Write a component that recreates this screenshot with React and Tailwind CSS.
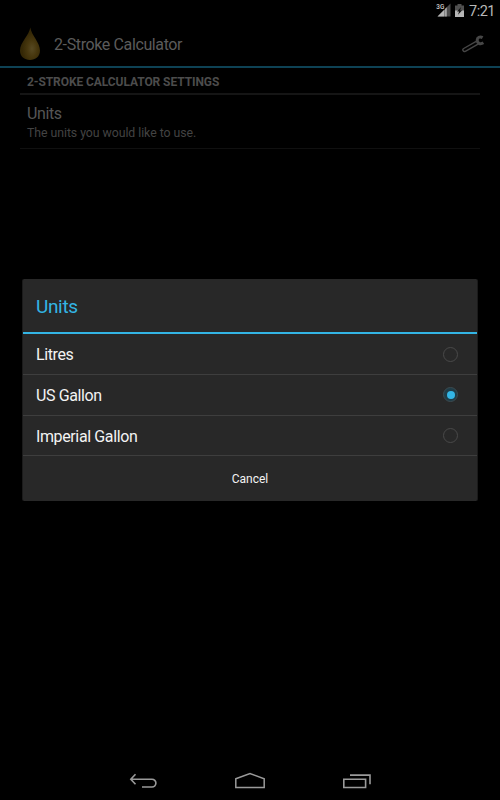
import React, { useState } from 'react';

const OPTIONS = ['Litres', 'US Gallon', 'Imperial Gallon'];

function StatusBar() {
  return (
    <div className="flex h-[22px] items-center justify-end pr-[5px]">
      <svg className="mr-[4px] h-[16px] w-[15px]" viewBox="0 0 15 16">
        <path d="M14.5 0.5V13.5H1.5z" fill="#4b4b4b" />
        <path d="M8 7V13.5H1.5z" fill="#b5b5b5" />
        <path d="M8.4 6.6L10.8 4.2V13.5H8.4z" fill="#a5a5a5" />
        <rect width="8.5" height="7" fill="#000" />
        <text x="0.3" y="6" fontSize="7" fontWeight="500" fill="#d0d0d0" fontFamily="Roboto" textLength="8" lengthAdjust="spacingAndGlyphs">3G</text>
      </svg>
      <svg className="mr-[5px] mb-[2px] h-[13px] w-[9px]" viewBox="0 0 9 13">
        <path d="M2.5 0h4v1.5H9V7H0V1.5h2.5z" fill="#505050" />
        <path d="M0 6.5h9V13H0z" fill="#b5b5b5" />
        <path d="M6.2 3L2 7.5h2.1L3 10.8L7.2 6.2H5z" fill="#111" />
      </svg>
      <span className="mt-[2px] text-[14.5px] leading-none tracking-[-0.5px] text-[#b8b8b8]">7:21</span>
    </div>
  );
}

function ActionBar() {
  return (
    <div className="flex h-[46px] items-center border-b-2 border-[#0e4255] pr-[15px] pl-[20px]">
      <svg className="h-[34px] w-[20px]" viewBox="0 0 20 34">
        <defs>
          <radialGradient id="oil" cx="0.6" cy="0.65" r="0.5">
            <stop offset="0" stopColor="#574922" />
            <stop offset="0.5" stopColor="#47370e" />
            <stop offset="1" stopColor="#352806" />
          </radialGradient>
        </defs>
        <path d="M10.3 0.5C11.3 8 20 15.5 20 23.5C20 29.5 15.5 33 10 33S0 29.5 0 23.5C0 15.5 9.3 8 10.3 0.5z" fill="url(#oil)" />
      </svg>
      <span className="mt-[2px] ml-[14px] flex-1 text-[16px] leading-none tracking-[-0.38px] text-[#5b5b5b]">2-Stroke Calculator</span>
      <svg className="h-[18px] w-[23px]" viewBox="0 0 23 18" fill="none" stroke="#464646">
        <path d="M14.2 6.3L1.7 13.5a1.6 1.6 0 0 0 1.6 2.8L16.5 8.8" strokeWidth="1.4" />
        <path d="M20.6 2.6C17.9 1 15.3 2.5 15.2 5C15.1 8.2 18.2 9.8 21.4 7.8" strokeWidth="3" />
      </svg>
    </div>
  );
}

function Preferences() {
  return (
    <div className="px-[20px]">
      <h2 className="h-[27px] border-b-2 border-[#151515] pl-[7px] text-[12px] leading-[28px] font-bold tracking-[-0.08px] text-[#4c4c4c]">
        2-STROKE CALCULATOR SETTINGS
      </h2>
      <div className="h-[54px] border-b border-[#101010] pt-[10px] pl-[7px]">
        <p className="text-[16px] leading-[18px] tracking-[-0.38px] text-[#565656]">Units</p>
        <p className="mt-[2px] text-[12.3px] leading-[16px] tracking-[-0.05px] text-[#434343]">The units you would like to use.</p>
      </div>
    </div>
  );
}

function Radio({ checked }) {
  return (
    <span
      className={`flex size-[15px] items-center justify-center rounded-full border ${
        checked ? 'border-[#3c4b50] bg-[#1f3c47]' : 'border-[#494949]'
      }`}
    >
      {checked && <span className="size-[8px] rounded-full bg-[#33b5e5]" />}
    </span>
  );
}

function UnitsDialog() {
  const [selected, setSelected] = useState('US Gallon');

  return (
    <div className="absolute top-[279px] right-[22px] left-[22px] flex h-[222px] flex-col rounded-[2px] border-x border-[#1b1b1b] bg-[#282828]">
      <h1 className="flex h-[55.4px] items-center border-b-[2px] border-[#33b5e5] pl-[13px] text-[19px] tracking-[-0.35px] text-[#33b5e5]">
        <span className="mt-[3px]">Units</span>
      </h1>
      {OPTIONS.map((option) => (
        <button
          key={option}
          onClick={() => setSelected(option)}
          className="flex h-[40.7px] items-center justify-between border-b border-[#3e3e3e] pr-[19px] pl-[13px] text-[16px] tracking-[-0.38px] text-[#f3f3f3]"
        >
          <span className="mt-[2px]">{option}</span>
          <Radio checked={selected === option} />
        </button>
      ))}
      <button className="flex-1 text-[12px] text-[#f3f3f3]">Cancel</button>
    </div>
  );
}

function NavigationBar() {
  return (
    <div className="mt-auto flex h-[40px] items-center justify-center gap-[78px] pr-[2px] text-[#9a9a9a]">
      <svg className="h-[18px] w-[29px]" viewBox="0 0 29 18" fill="none" stroke="currentColor" strokeWidth="1.6">
        <path d="M3 8.2H24A3.8 3.8 0 0 1 24 16H14M7.5 3.2L2.8 8.2L7.5 13.2" />
      </svg>
      <svg className="h-[18px] w-[30px]" viewBox="0 0 30 18" fill="none" stroke="currentColor" strokeWidth="1.5">
        <path d="M0.8 7.8L15 2.6L29.2 7.8V16.4H0.8z" />
      </svg>
      <svg className="h-[18px] w-[28px]" viewBox="0 0 28 18" fill="none" stroke="currentColor" strokeWidth="1.6">
        <path d="M0.8 8.2H22.6V16.5H0.8zM7 4.1H27V13.3" />
      </svg>
    </div>
  );
}

export default function App() {
  return (
    <div className="relative flex h-[800px] w-[500px] flex-col overflow-hidden bg-black font-['Roboto',sans-serif]">
      <StatusBar />
      <ActionBar />
      <Preferences />
      <UnitsDialog />
      <NavigationBar />
    </div>
  );
}
